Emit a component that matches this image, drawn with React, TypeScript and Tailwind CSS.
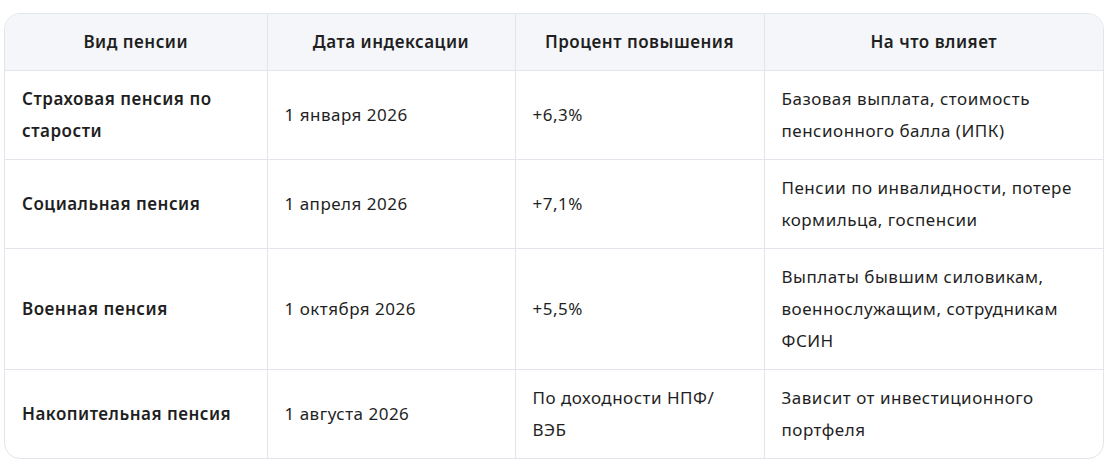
import React from "react";

const rows: [string, string, string, string][] = [
  ["Страховая пенсия по старости", "1 января 2026", "+6,3%", "Базовая выплата, стоимость пенсионного балла (ИПК)"],
  ["Социальная пенсия", "1 апреля 2026", "+7,1%", "Пенсии по инвалидности, потере кормильца, госпенсии"],
  ["Военная пенсия", "1 октября 2026", "+5,5%", "Выплаты бывшим силовикам, военнослужащим, сотрудникам ФСИН"],
  ["Накопительная пенсия", "1 августа 2026", "По доходности НПФ/ВЭБ", "Зависит от инвестиционного портфеля"],
];

export default function App() {
  return (
    <div className="bg-white w-[1109px] h-[469px] pt-[13px] pl-[4px]" style={{ fontFamily: '"Noto Sans", "Open Sans", sans-serif' }}>
      <div className="w-[1100px] border border-[#e3e5ec] rounded-[16px] overflow-hidden">
        <table className="w-full border-collapse table-fixed text-[17px] tracking-[0.5px] leading-[32px] text-[#1f1f1f]">
          <colgroup>
            <col className="w-[262px]" />
            <col className="w-[248px]" />
            <col className="w-[249px]" />
            <col />
          </colgroup>
          <thead>
            <tr className="bg-[#f5f6fa]">
              {["Вид пенсии", "Дата индексации", "Процент повышения", "На что влияет"].map((h, i) => (
                <th key={h} className={`font-semibold text-center py-3 px-[18px] border-b border-[#e3e5ec] ${i > 0 ? "border-l" : ""}`}>{h}</th>
              ))}
            </tr>
          </thead>
          <tbody>
            {rows.map((r, ri) => (
              <tr key={ri}>
                {r.map((c, i) => (
                  <td key={i} className={`align-middle py-3 px-[17px] border-[#e3e5ec] ${ri < rows.length - 1 ? "border-b" : ""} ${i > 0 ? "border-l" : ""} ${i === 0 ? "font-semibold" : ""}`}>
                    {c === "По доходности НПФ/ВЭБ" ? <>По доходности НПФ/<wbr />ВЭБ</> : c}
                  </td>
                ))}
              </tr>
            ))}
          </tbody>
        </table>
      </div>
    </div>
  );
}
